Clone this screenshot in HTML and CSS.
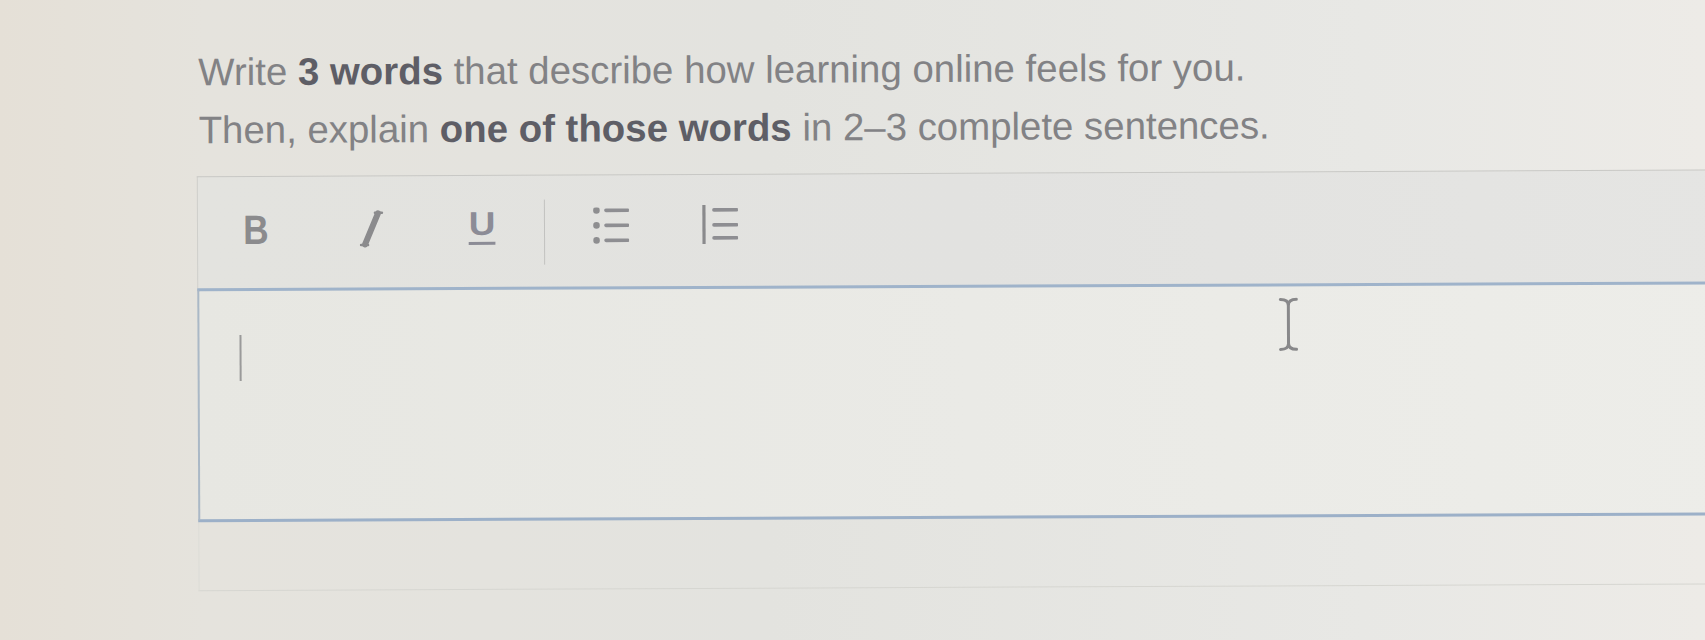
FILE: index.html
```html
<!DOCTYPE html>
<html lang="en">
<head>
<meta charset="utf-8">
<title>Prompt</title>
<link rel="stylesheet" href="styles.css">
</head>
<body>
<div class="page">
  <div class="prompt">
    <p class="line">Write <b>3 words</b> that describe how learning online feels for you.</p>
    <p class="line">Then, explain <b>one of those words</b> in 2&ndash;3 complete sentences.</p>
  </div>
  <div class="toolbar">
    <span class="btn btn-b">B</span>
    <span class="btn btn-i">
      <svg width="30" height="40" viewBox="0 0 30 40">
        <g stroke="#8b8b8d" stroke-linecap="round">
          <line x1="22" y1="4" x2="9" y2="35" stroke-width="6"/>
          <line x1="19" y1="3.5" x2="26" y2="3.5" stroke-width="2.5"/>
          <line x1="5" y1="35.5" x2="12" y2="35.5" stroke-width="2.5"/>
        </g>
      </svg>
    </span>
    <span class="btn btn-u">U</span>
    <span class="sep"></span>
    <span class="btn btn-ul">
      <svg width="36" height="40" viewBox="0 0 36 40">
        <g fill="#8e8e90">
          <circle cx="3.5" cy="3" r="3.3"/>
          <circle cx="3.5" cy="18" r="3.3"/>
          <circle cx="3.5" cy="33" r="3.3"/>
        </g>
        <g stroke="#8e8e92" stroke-width="3.6" stroke-linecap="round">
          <line x1="13" y1="3" x2="35" y2="3"/>
          <line x1="13" y1="18" x2="35" y2="18"/>
          <line x1="13" y1="33" x2="35" y2="33"/>
        </g>
      </svg>
    </span>
    <span class="btn btn-ol">
      <svg width="36" height="42" viewBox="0 0 36 42">
        <line x1="2" y1="0" x2="2" y2="39" stroke="#8a8a8c" stroke-width="3.2"/>
        <g stroke="#8e8e92" stroke-width="3.6" stroke-linecap="round">
          <line x1="12" y1="5" x2="35" y2="5"/>
          <line x1="12" y1="20" x2="35" y2="20"/>
          <line x1="12" y1="33" x2="35" y2="33"/>
        </g>
      </svg>
    </span>
  </div>
  <div class="editor">
    <span class="caret"></span>
    <svg class="ibeam" width="22" height="54" viewBox="0 0 22 54">
      <g fill="none" stroke="#88888a" stroke-linecap="round">
        <path d="M3 2 Q11 2 11 8 Q11 2 19 2" stroke-width="3"/>
        <line x1="11" y1="8" x2="11" y2="46" stroke-width="3"/>
        <path d="M3 52 Q11 52 11 46 Q11 52 19 52" stroke-width="3"/>
      </g>
    </svg>
  </div>
  <div class="below"></div>
</div>
</body>
</html>
```
FILE: styles.css
```css
html, body {
  margin: 0;
  padding: 0;
}
body {
  width: 1705px;
  height: 640px;
  overflow: hidden;
  background: linear-gradient(90deg, #e5e0d7 0%, #e5e3dd 12%, #e3e3df 45%, #e8e8e5 80%, #edebe7 100%);
  font-family: "Liberation Sans", Arial, sans-serif;
}
.page {
  padding: 44px 0 0 196px;
  transform: rotate(-0.25deg);
  transform-origin: 0 0;
}
.prompt {
  padding-left: 2px;
}
.line {
  margin: 0;
  font-size: 38.4px;
  line-height: 58px;
  color: #828285;
  white-space: nowrap;
}
.line b {
  color: #5e5e66;
  font-weight: bold;
}
.toolbar {
  margin-top: 17px;
  width: 1540px;
  height: 112px;
  box-sizing: border-box;
  border-top: 1px solid #c8c8c5;
  border-left: 1px solid #cfcfcb;
  background: linear-gradient(90deg, #e3e3df 0%, #e2e2e0 50%, #e5e5e3 100%);
  display: flex;
  align-items: flex-start;
  padding-top: 33px;
  padding-left: 43px;
}
.btn {
  display: block;
  color: #8b8b8d;
  line-height: 40px;
  height: 40px;
  text-align: center;
}
.btn-b {
  width: 30px;
  font-size: 41px;
  font-weight: bold;
  transform: scaleX(0.86);
}
.btn-i {
  width: 30px;
  margin-left: 85px;
}
.btn-u {
  width: 30px;
  margin-left: 81px;
  font-size: 33px;
  line-height: 30px;
  font-weight: bold;
  color: #8c8c96;
  text-decoration: underline;
  text-decoration-thickness: 3px;
  text-underline-offset: 7px;
  transform: scaleX(1.12);
}
.sep {
  display: block;
  width: 1px;
  height: 65px;
  margin-top: -9px;
  margin-left: 47px;
  background: #c2c2c0;
}
.btn-ul {
  width: 36px;
  margin-left: 48px;
  margin-top: -1px;
}
.btn-ol {
  width: 36px;
  margin-left: 73px;
  margin-top: -3px;
}
.editor {
  position: relative;
  width: 1540px;
  height: 228px;
  border-top: 3px solid #9fb3ca;
  border-left: 2px solid #aab8c6;
  border-bottom: 3px solid #9cb0c8;
  background: linear-gradient(90deg, #e7e7e2 0%, #eaeae6 50%, #edede9 100%);
}
.caret {
  display: block;
  width: 2px;
  height: 46px;
  margin: 44px 0 0 40px;
  background: #9a9a9a;
}
.ibeam {
  position: absolute;
  left: 1078px;
  top: 11px;
}
.below {
  width: 1540px;
  height: 68px;
  border-left: 1px solid #dcdcd7;
  border-bottom: 1px solid #d6d6d1;
}
```
